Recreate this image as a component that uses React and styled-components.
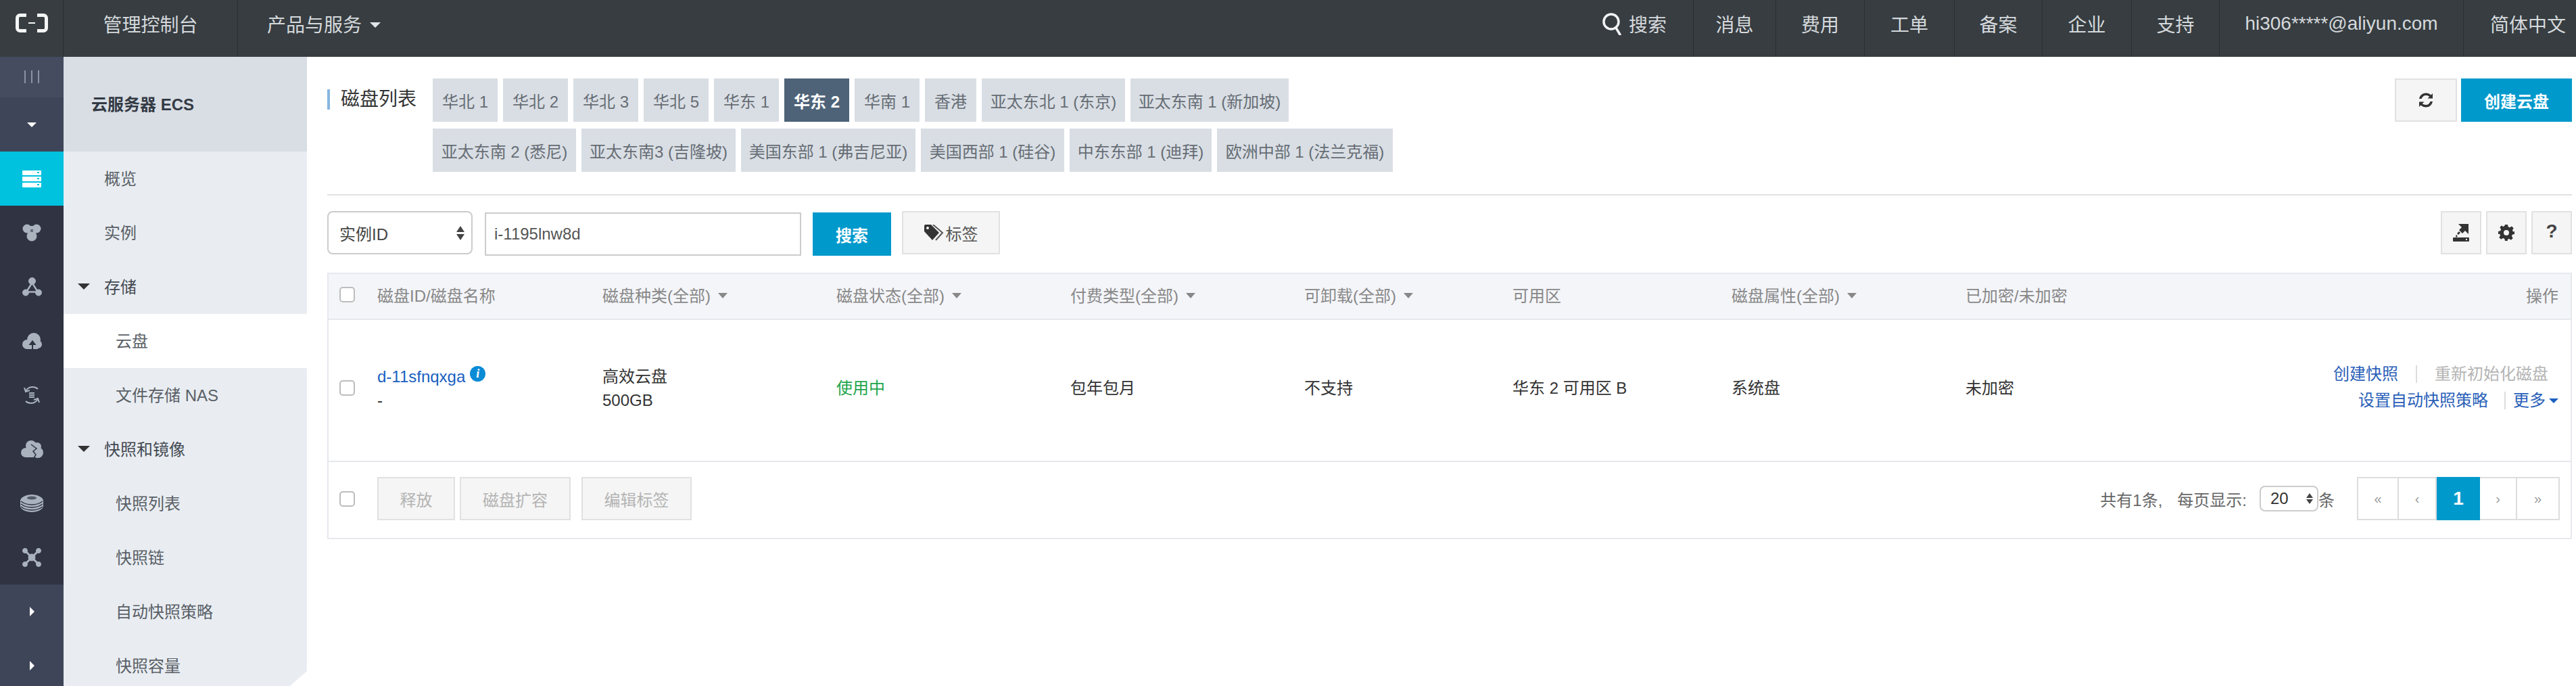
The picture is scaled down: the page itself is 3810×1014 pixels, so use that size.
import styled, { createGlobalStyle } from "styled-components";

const GlobalStyle = createGlobalStyle`
  html, body {
    margin: 0;
    padding: 0;
    height: 100%;
    overflow: hidden;
    background: #fff;
  }
  body {
    font-family: "Liberation Sans", "Noto Sans CJK SC", sans-serif;
    font-size: 24px;
    color: #333;
  }
  * {
    box-sizing: border-box;
  }
`;

const BLUE = "#0099cc";
const COLUMNS = "72px 333px 346px 346px 346px 308px 324px 346px 300px 1fr";

const regionsTop = [
  ["华北 1", 96],
  ["华北 2", 96],
  ["华北 3", 96],
  ["华北 5", 96],
  ["华东 1", 96],
  ["华东 2", 96, true],
  ["华南 1", 96],
  ["香港", 76],
  ["亚太东北 1 (东京)", 212],
  ["亚太东南 1 (新加坡)", 234],
];

const regionsBottom = [
  ["亚太东南 2 (悉尼)", 212],
  ["亚太东南3 (吉隆坡)", 228],
  ["美国东部 1 (弗吉尼亚)", 258],
  ["美国西部 1 (硅谷)", 212],
  ["中东东部 1 (迪拜)", 210],
  ["欧洲中部 1 (法兰克福)", 260],
];

const headers = [
  ["磁盘ID/磁盘名称", false],
  ["磁盘种类(全部)", true],
  ["磁盘状态(全部)", true],
  ["付费类型(全部)", true],
  ["可卸载(全部)", true],
  ["可用区", false],
  ["磁盘属性(全部)", true],
  ["已加密/未加密", false],
];

const Page = styled.div`
  width: 3810px;
  height: 1014px;
  overflow: hidden;
  display: flex;
  flex-direction: column;
`;

/* top bar */
const TopBar = styled.header`
  height: 84px;
  flex: none;
  background: #373d41;
  display: flex;
  justify-content: space-between;
  color: #d5d9dc;
  font-size: 28px;
`;

const TopGroup = styled.div`
  display: flex;
`;

const TopCell = styled.div`
  width: ${(p) => p.$w}px;
  height: 84px;
  padding: 0 0 14px ${(p) => p.$pl || 0}px;
  display: flex;
  align-items: center;
  justify-content: ${(p) => (p.$pl ? "flex-start" : "center")};
  gap: 6px;
  white-space: nowrap;
  border-right: ${(p) => (p.$noline ? "none" : "1px solid #2a2f32")};
`;

const LogoCell = styled(TopCell)`
  padding-bottom: 17px;
`;

const TopCaret = styled.i`
  width: 0;
  height: 0;
  margin: 4px 0 0 6px;
  border: 8px solid transparent;
  border-bottom: none;
  border-top: 8px solid #e2e5e7;
`;

/* narrow icon rail */
const Body = styled.div`
  flex: 1;
  min-height: 0;
  display: flex;
`;

const Rail = styled.nav`
  width: 94px;
  flex: none;
  background: #2f3342;
  display: flex;
  flex-direction: column;
`;

const RailToggle = styled.div`
  height: 60px;
  flex: none;
  background: #454c60;
  display: flex;
  justify-content: center;
  gap: 8px;
  padding-top: 20px;
  span {
    width: 2px;
    height: 19px;
    background: #8b92a6;
  }
`;

const RailGroup = styled.div`
  height: 80px;
  flex: none;
  background: #3e4558;
  display: flex;
  align-items: center;
  justify-content: center;
`;

const RailItem = styled.div`
  height: 80px;
  flex: none;
  display: flex;
  align-items: center;
  justify-content: center;
  background: ${(p) => (p.$active ? "#00c1de" : "transparent")};
  color: ${(p) => (p.$active ? "#fff" : "#a9b2bd")};
`;

const CaretDown = styled.i`
  width: 0;
  height: 0;
  border: 7px solid transparent;
  border-bottom: none;
  border-top: 7px solid ${(p) => p.$color || "#fff"};
`;

const CaretRight = styled.i`
  width: 0;
  height: 0;
  border: 7px solid transparent;
  border-right: none;
  border-left: 7px solid #fff;
`;

/* second sidebar */
const Side = styled.aside`
  position: relative;
  width: 360px;
  flex: none;
  background: #e9edf2;
  color: #595f66;
  overflow: hidden;
  &::after {
    content: "";
    position: absolute;
    right: 0;
    bottom: 0;
    width: 25px;
    height: 22px;
    background: #fff;
    clip-path: polygon(100% 0, 100% 100%, 0 100%);
  }
`;

const SideTitle = styled.div`
  height: 140px;
  background: #d9dee4;
  padding: 0 0 4px 41px;
  display: flex;
  align-items: center;
  font-weight: bold;
  color: #333a44;
`;

const SideRow = styled.div`
  height: 80px;
  display: flex;
  align-items: center;
  padding-left: ${(p) => (p.$sub ? 77 : 60)}px;
  padding-bottom: 3px;
  background: ${(p) => (p.$active ? "#fff" : "transparent")};
  color: ${(p) => (p.$group ? "#444a52" : "#595f66")};
  white-space: nowrap;
`;

const SideCaret = styled(CaretDown)`
  margin: 2px 21px 0 -39px;
  border-width: 9px;
  border-bottom: none;
  border-top-width: 9px;
`;

/* main column */
const Main = styled.main`
  flex: 1;
  min-width: 0;
  padding: 32px 6px 0 30px;
`;

const HeadRow = styled.div`
  display: flex;
  justify-content: space-between;
  align-items: flex-start;
  padding-bottom: 33px;
  border-bottom: 2px solid #e1e1e1;
`;

const TitleBlock = styled.div`
  display: flex;
`;

const Title = styled.h2`
  width: 156px;
  height: 30px;
  margin: 16px 0 0;
  padding-left: 16px;
  border-left: 4px solid #88b7e0;
  font-size: 28px;
  line-height: 30px;
  font-weight: normal;
  color: #333;
  white-space: nowrap;
`;

const Regions = styled.div`
  display: flex;
  flex-direction: column;
  gap: 10px;
`;

const RegionRow = styled.div`
  display: flex;
  gap: 8px;
`;

const Region = styled.div`
  width: ${(p) => p.$w}px;
  height: 64px;
  display: flex;
  align-items: center;
  justify-content: center;
  white-space: nowrap;
  background: ${(p) => (p.$active ? "#4e6378" : "#d9dee4")};
  color: ${(p) => (p.$active ? "#fff" : "#666d75")};
  font-weight: ${(p) => (p.$active ? "bold" : "normal")};
`;

const HeadActions = styled.div`
  display: flex;
  gap: 6px;
`;

const Button = styled.div`
  width: ${(p) => p.$w}px;
  height: ${(p) => p.$h || 64}px;
  flex: none;
  display: flex;
  align-items: center;
  justify-content: center;
  border: 2px solid #e1e1e1;
  background: #f5f5f5;
  color: #333;
  white-space: nowrap;
`;

const PrimaryButton = styled(Button)`
  border: none;
  background: ${BLUE};
  color: #fff;
  font-weight: bold;
`;

const MutedButton = styled(Button)`
  color: #b4b4b4;
`;

const HelpButton = styled(Button)`
  font-size: 28px;
  font-weight: bold;
  padding-bottom: 4px;
  color: #444;
`;

const Toolbar = styled.div`
  display: flex;
  align-items: flex-start;
  padding-top: 23px;
`;

const SelectBox = styled.div`
  display: flex;
  align-items: center;
  justify-content: space-between;
  border: 2px solid #ccc;
  border-radius: 8px;
  background: #fff;
  color: #444;
  white-space: nowrap;
`;

const IdSelect = styled(SelectBox)`
  width: 215px;
  height: 64px;
  padding: 0 10px 0 16px;
  margin-right: 18px;
`;

const Search = styled.div`
  width: 468px;
  height: 64px;
  margin: 2px 17px 0 0;
  padding-left: 12px;
  display: flex;
  align-items: center;
  border: 2px solid #ccc;
  color: #555;
`;

const SearchButton = styled(PrimaryButton)`
  margin: 2px 16px 0 0;
`;

const TagButton = styled(Button)`
  gap: 2px;
  color: #555;
`;

const ToolsRight = styled.div`
  margin-left: auto;
  display: flex;
  gap: 7px;
`;

const Arrows = styled.span`
  display: flex;
  flex-direction: column;
  gap: 3px;
  &::before,
  &::after {
    content: "";
    width: 0;
    height: 0;
    border: 6px solid transparent;
  }
  &::before {
    border-top: none;
    border-bottom: 9px solid #444;
  }
  &::after {
    border-bottom: none;
    border-top: 9px solid #444;
  }
`;

/* table */
const Table = styled.section`
  margin-top: 25px;
  border: 2px solid #e6e8ee;
`;

const Row = styled.div`
  display: grid;
  grid-template-columns: ${COLUMNS};
  align-items: center;
`;

const HeaderRow = styled(Row)`
  height: 68px;
  background: #f4f5f9;
  border-bottom: 2px solid #e6e8ee;
  color: #888;
  padding-bottom: 6px;
`;

const DataRow = styled(Row)`
  height: 210px;
  border-bottom: 2px solid #e6e8ee;
  color: #333;
  line-height: 35px;
  padding-bottom: 8px;
`;

const Cell = styled.div`
  display: flex;
  align-items: center;
  white-space: nowrap;
  min-width: 0;
`;

const HeadCaret = styled.i`
  width: 0;
  height: 0;
  margin: 4px 0 0 11px;
  border: 7px solid transparent;
  border-bottom: none;
  border-top: 8px solid #888;
`;

const OperateHead = styled(Cell)`
  justify-content: flex-end;
  padding-right: 18px;
`;

const CheckCell = styled.div`
  padding-left: 16px;
  display: flex;
`;

const Check = styled.span`
  width: 23px;
  height: 23px;
  border: 2px solid #bdbdbd;
  border-radius: 5px;
  background: #fff;
`;

const TwoLines = styled.div`
  display: flex;
  flex-direction: column;
  margin-top: 2px;
`;

const Link = styled.span`
  color: ${(p) => (p.$off ? "#b4b4b4" : "#2a5fb8")};
`;

const IdLine = styled.div`
  display: flex;
  align-items: center;
  color: #1a5fc0;
  gap: 7px;
`;

const InfoDot = styled.span`
  width: 23px;
  height: 23px;
  margin-top: -8px;
  border-radius: 50%;
  background: #0a8bd6;
  color: #fff;
  font: italic bold 18px/23px "Liberation Serif", serif;
  text-align: center;
`;

const Status = styled.span`
  color: #1ea54c;
`;

const Operate = styled.div`
  display: flex;
  flex-direction: column;
  align-items: flex-end;
  line-height: 39px;
  margin-top: -2px;
  padding-right: 18px;
`;

const OperateLine = styled.div`
  display: flex;
  align-items: center;
  white-space: nowrap;
  padding-right: ${(p) => p.$pr || 0}px;
`;

const Sep = styled.i`
  width: 2px;
  height: 26px;
  margin: 0 ${(p) => p.$right}px 0 ${(p) => p.$left}px;
  background: #ddd;
`;

const MoreCaret = styled(CaretDown)`
  margin: 2px 0 0 5px;
`;

const Foot = styled.div`
  height: 112px;
  display: flex;
  align-items: center;
  padding-right: 16px;
  padding-bottom: 4px;
  color: #666;
`;

const FootButtons = styled.div`
  margin-left: 33px;
  display: flex;
  gap: 7px;
  ${MutedButton}:last-child {
    margin-left: 9px;
  }
`;

const PageInfo = styled.div`
  margin-left: auto;
  display: flex;
  align-items: center;
  white-space: nowrap;
`;

const PageGap = styled.span`
  width: 22px;
`;

const SizeSelect = styled(SelectBox)`
  width: 87px;
  height: 38px;
  margin: 0 0 0 19px;
  padding: 0 6px 0 14px;
  color: #333;
  ${Arrows} {
    gap: 2px;
    &::before {
      border-width: 0 5px 7px;
      border-color: transparent transparent #444;
    }
    &::after {
      border-width: 7px 5px 0;
      border-color: #444 transparent transparent;
    }
  }
`;

const Pager = styled.div`
  margin-left: 33px;
  display: flex;
  height: 64px;
  border: 2px solid #ddd;
`;

const PagerCell = styled.div`
  width: ${(p) => p.$w}px;
  display: flex;
  align-items: center;
  justify-content: center;
  color: ${(p) => (p.$active ? "#fff" : "#999")};
  font-size: ${(p) => (p.$active ? 28 : 20)}px;
  font-weight: ${(p) => (p.$active ? "bold" : "normal")};
  background: ${(p) => (p.$active ? BLUE : "#fff")};
  margin: ${(p) => (p.$active ? "-2px 0" : 0)};
  border-right: ${(p) => (p.$active || p.$last ? "none" : "2px solid #ddd")};
`;

/* drawings */
const Logo = () => (
  <svg width="48" height="28" viewBox="0 0 48 28" fill="none" stroke="#f4f5f5" strokeWidth="5">
    <path d="M16 2.5H6.5a4 4 0 0 0-4 4v15a4 4 0 0 0 4 4H16" />
    <path d="M32 2.5h9.5a4 4 0 0 1 4 4v15a4 4 0 0 1-4 4H32" />
    <path d="M19 14h10" strokeWidth="2" />
  </svg>
);

const ServerIcon = () => (
  <svg width="28" height="25" viewBox="0 0 28 25" fill="currentColor">
    <rect y="0" width="28" height="7" rx="1" />
    <rect y="9" width="28" height="7" rx="1" />
    <rect y="18" width="28" height="7" rx="1" />
    <rect x="22" y="2" width="3" height="2" fill="#00c1de" />
    <rect x="22" y="11" width="3" height="2" fill="#00c1de" />
    <rect x="22" y="20" width="3" height="2" fill="#00c1de" />
  </svg>
);

// three rounded lobes with a small square in the middle
const TrefoilIcon = () => (
  <svg width="28" height="26" viewBox="0 0 28 26" fill="currentColor">
    <circle cx="7" cy="7" r="6.500" />
    <circle cx="21" cy="7" r="6.500" />
    <circle cx="14" cy="18" r="7.500" />
    <rect x="8" y="3" width="12" height="12" />
    <rect x="12" y="8" width="4" height="4" fill="#2f3342" opacity="0.55" />
  </svg>
);

const NodesIcon = () => (
  <svg width="29" height="28" viewBox="0 0 29 28" fill="currentColor" stroke="currentColor">
    <circle cx="14.500" cy="5.500" r="5" />
    <circle cx="5" cy="22.500" r="4.500" />
    <circle cx="24" cy="22.500" r="4.500" />
    <path d="M14.500 8L6 21.500h17L14.500 8z" fill="none" strokeWidth="2.500" />
  </svg>
);

const CloudUpIcon = () => (
  <svg width="29" height="24" viewBox="0 0 29 24" fill="currentColor">
    <circle cx="17" cy="10" r="10" />
    <circle cx="7" cy="17" r="7" />
    <circle cx="23" cy="17" r="6" />
    <rect x="7" y="14" width="16" height="10" />
    <path d="M15 24v-8M11.500 17l3.500-4.500 3.500 4.500z" fill="#2f3342" stroke="#2f3342" strokeWidth="2" />
  </svg>
);

const CycleIcon = () => (
  <svg width="26" height="30" viewBox="0 0 26 30" fill="none" stroke="currentColor" strokeWidth="2">
    <path d="M4 10C5 6 9 3 14 3c3 0 6 1 8 3" />
    <path d="M22 20c-1 4-5 7-10 7-3 0-6-1-8-3" />
    <path d="M2 4l2 6 6-2M24 26l-2-6-6 2" />
    <path d="M9 12h8M9 15h8M9 18h8" strokeWidth="1.800" />
  </svg>
);

const CloudsIcon = () => (
  <svg width="33" height="27" viewBox="0 0 33 27" fill="currentColor">
    <circle cx="15" cy="8" r="8" />
    <circle cx="24" cy="9" r="6" />
    <circle cx="7" cy="18" r="7" />
    <circle cx="25" cy="18" r="8" />
    <rect x="7" y="14" width="18" height="11" />
    <path d="M15 6l8 6-5 4 4 5-3 5" fill="none" stroke="#2f3342" strokeWidth="1.500" />
  </svg>
);

const LayersIcon = () => (
  <svg width="34" height="26" viewBox="0 0 34 26" fill="currentColor">
    <path d="M17 0c8 0 17 4 17 9v8c0 5-9 9-17 9S0 22 0 17V9c0-5 9-9 17-9z" />
    <ellipse cx="17" cy="5" rx="7" ry="2.500" fill="#2f3342" opacity="0.7" />
    <path d="M1 10c4 3 10 5 16 5s12-2 16-5M1 14c4 3 10 5 16 5s12-2 16-5M1 18c4 3 10 5 16 5s12-2 16-5" fill="none" stroke="#2f3342" strokeWidth="1.500" />
  </svg>
);

const CrossNodesIcon = () => (
  <svg width="28" height="28" viewBox="0 0 28 28" fill="currentColor" stroke="currentColor">
    <circle cx="4" cy="4" r="3.500" />
    <circle cx="24" cy="4" r="3.500" />
    <circle cx="4" cy="24" r="3.500" />
    <circle cx="24" cy="24" r="3.500" />
    <path d="M4 4l20 20M24 4L4 24" strokeWidth="3" />
    <circle cx="14" cy="14" r="5" />
  </svg>
);

const SearchIcon = () => (
  <svg width="34" height="34" viewBox="0 0 34 34" fill="none" stroke="#f0f2f3" strokeWidth="3.500">
    <circle cx="14" cy="14" r="11" />
    <path d="M21 23l6 10" strokeLinecap="round" />
  </svg>
);

const RefreshIcon = () => (
  <svg width="24" height="24" viewBox="0 0 24 24" fill="#333">
    <path d="M2 10C3 5 7 1.500 12 1.500c3 0 5.500 1 7.500 3l2.500-2.500v7.500h-7.500l2.800-2.800C15.500 5.500 14 5 12 5 9 5 6.500 7 5.500 10H2z" />
    <path d="M22 14c-1 5-5 8.500-10 8.500-3 0-5.500-1-7.500-3L2 22v-7.500h7.500l-2.800 2.800C8.500 18.500 10 19 12 19c3 0 5.500-2 6.500-5H22z" />
  </svg>
);

const ExportIcon = () => (
  <svg width="24" height="26" viewBox="0 0 24 26" fill="#333">
    <path d="M8 0h15v15l-5-5-4 4-5-5 4-4-5-5z" />
    <path d="M9 11l2 2-3 3-2-2zM5 16l2 2-2 2-1-2z" />
    <rect y="20" width="24" height="6" rx="1" />
    <rect x="19" y="22" width="2" height="2" fill="#f5f5f5" />
  </svg>
);

const GearIcon = () => (
  <svg width="24" height="24" viewBox="0 0 24 24">
    <path
      fill="#333"
      fillRule="evenodd"
      d="M10 0h4l.7 3.300 2.300 1 2.900-1.800 2.800 2.800-1.800 2.900 1 2.300L24 10v4l-3.100.7-1 2.300 1.800 2.900-2.800 2.800-2.900-1.800-2.300 1L14 24h-4l-.7-3.100-2.300-1-2.900 1.800-2.800-2.800 1.800-2.900-1-2.300L0 14v-4l3.100-.7 1-2.300-1.800-2.900 2.800-2.800L7 3.100l2.300-1L10 0zm2 8a4 4 0 1 0 0 8 4 4 0 0 0 0-8z"
    />
  </svg>
);

const TagsIcon = () => (
  <svg width="30" height="24" viewBox="0 0 30 24">
    <path fill="#333" d="M0 2a2 2 0 0 1 2-2h8l12 12-10 11L0 10V2z" />
    <circle cx="5" cy="5" r="2" fill="#f5f5f5" />
    <path d="M13 0l14 12-10 11" fill="none" stroke="#555" strokeWidth="2" />
  </svg>
);

const railIcons = [
  <TrefoilIcon />,
  <NodesIcon />,
  <CloudUpIcon />,
  <CycleIcon />,
  <CloudsIcon />,
  <LayersIcon />,
  <CrossNodesIcon />,
];

const App = () => {
  return (
    <>
      <GlobalStyle />
      <Page>
        <TopBar>
          <TopGroup>
            <LogoCell $w={94}>
              <Logo />
            </LogoCell>
            <TopCell $w={258}>管理控制台</TopCell>
            <TopCell $w={300} $pl={43} $noline>
              产品与服务
              <TopCaret />
            </TopCell>
          </TopGroup>
          <TopGroup>
            <TopCell $w={180} $pl={44}>
              <SearchIcon />
              搜索
            </TopCell>
            <TopCell $w={122}>消息</TopCell>
            <TopCell $w={131}>费用</TopCell>
            <TopCell $w={133}>工单</TopCell>
            <TopCell $w={130}>备案</TopCell>
            <TopCell $w={132}>企业</TopCell>
            <TopCell $w={130}>支持</TopCell>
            <TopCell $w={361}>hi306*****@aliyun.com</TopCell>
            <TopCell $w={166} $pl={39} $noline>
              简体中文
            </TopCell>
          </TopGroup>
        </TopBar>
        <Body>
          <Rail>
            <RailToggle>
              <span />
              <span />
              <span />
            </RailToggle>
            <RailGroup>
              <CaretDown />
            </RailGroup>
            <RailItem $active>
              <ServerIcon />
            </RailItem>
            {railIcons.map((icon, i) => (
              <RailItem key={i}>{icon}</RailItem>
            ))}
            <RailGroup>
              <CaretRight />
            </RailGroup>
            <RailGroup>
              <CaretRight />
            </RailGroup>
          </Rail>
          <Side>
            <SideTitle>云服务器 ECS</SideTitle>
            <SideRow>概览</SideRow>
            <SideRow>实例</SideRow>
            <SideRow $group>
              <SideCaret $color="#333" />
              存储
            </SideRow>
            <SideRow $sub $active>
              云盘
            </SideRow>
            <SideRow $sub>文件存储 NAS</SideRow>
            <SideRow $group>
              <SideCaret $color="#333" />
              快照和镜像
            </SideRow>
            <SideRow $sub>快照列表</SideRow>
            <SideRow $sub>快照链</SideRow>
            <SideRow $sub>自动快照策略</SideRow>
            <SideRow $sub>快照容量</SideRow>
          </Side>
          <Main>
            <HeadRow>
              <TitleBlock>
                <Title>磁盘列表</Title>
                <Regions>
                  <RegionRow>
                    {regionsTop.map(([label, w, active]) => (
                      <Region key={label} $w={w} $active={active}>
                        {label}
                      </Region>
                    ))}
                  </RegionRow>
                  <RegionRow>
                    {regionsBottom.map(([label, w]) => (
                      <Region key={label} $w={w}>
                        {label}
                      </Region>
                    ))}
                  </RegionRow>
                </Regions>
              </TitleBlock>
              <HeadActions>
                <Button $w={92}>
                  <RefreshIcon />
                </Button>
                <PrimaryButton $w={164}>创建云盘</PrimaryButton>
              </HeadActions>
            </HeadRow>
            <Toolbar>
              <IdSelect>
                实例ID
                <Arrows />
              </IdSelect>
              <Search>i-1195lnw8d</Search>
              <SearchButton $w={116}>搜索</SearchButton>
              <TagButton $w={145}>
                <TagsIcon />
                标签
              </TagButton>
              <ToolsRight>
                <Button $w={60}>
                  <ExportIcon />
                </Button>
                <Button $w={60}>
                  <GearIcon />
                </Button>
                <HelpButton $w={60}>?</HelpButton>
              </ToolsRight>
            </Toolbar>
            <Table>
              <HeaderRow>
                <CheckCell>
                  <Check />
                </CheckCell>
                {headers.map(([label, caret]) => (
                  <Cell key={label}>
                    {label}
                    {caret && <HeadCaret />}
                  </Cell>
                ))}
                <OperateHead>操作</OperateHead>
              </HeaderRow>
              <DataRow>
                <CheckCell>
                  <Check />
                </CheckCell>
                <TwoLines>
                  <IdLine>
                    d-11sfnqxga
                    <InfoDot>i</InfoDot>
                  </IdLine>
                  <div>-</div>
                </TwoLines>
                <TwoLines>
                  <div>高效云盘</div>
                  <div>500GB</div>
                </TwoLines>
                <Cell>
                  <Status>使用中</Status>
                </Cell>
                <Cell>包年包月</Cell>
                <Cell>不支持</Cell>
                <Cell>华东 2 可用区 B</Cell>
                <Cell>系统盘</Cell>
                <Cell>未加密</Cell>
                <Operate>
                  <OperateLine $pr={15}>
                    <Link>创建快照</Link>
                    <Sep $left={26} $right={26} />
                    <Link $off>重新初始化磁盘</Link>
                  </OperateLine>
                  <OperateLine>
                    <Link>设置自动快照策略</Link>
                    <Sep $left={24} $right={11} />
                    <Link>更多</Link>
                    <MoreCaret $color="#1a5fc0" />
                  </OperateLine>
                </Operate>
              </DataRow>
              <Foot>
                <CheckCell>
                  <Check />
                </CheckCell>
                <FootButtons>
                  <MutedButton $w={115}>释放</MutedButton>
                  <MutedButton $w={164}>磁盘扩容</MutedButton>
                  <MutedButton $w={163}>编辑标签</MutedButton>
                </FootButtons>
                <PageInfo>
                  共有1条,
                  <PageGap />
                  每页显示:
                  <SizeSelect>
                    20
                    <Arrows />
                  </SizeSelect>
                  条
                </PageInfo>
                <Pager>
                  <PagerCell $w={60}>«</PagerCell>
                  <PagerCell $w={56}>‹</PagerCell>
                  <PagerCell $w={64} $active>
                    1
                  </PagerCell>
                  <PagerCell $w={55}>›</PagerCell>
                  <PagerCell $w={61} $last>
                    »
                  </PagerCell>
                </Pager>
              </Foot>
            </Table>
          </Main>
        </Body>
      </Page>
    </>
  );
};

export default App;
